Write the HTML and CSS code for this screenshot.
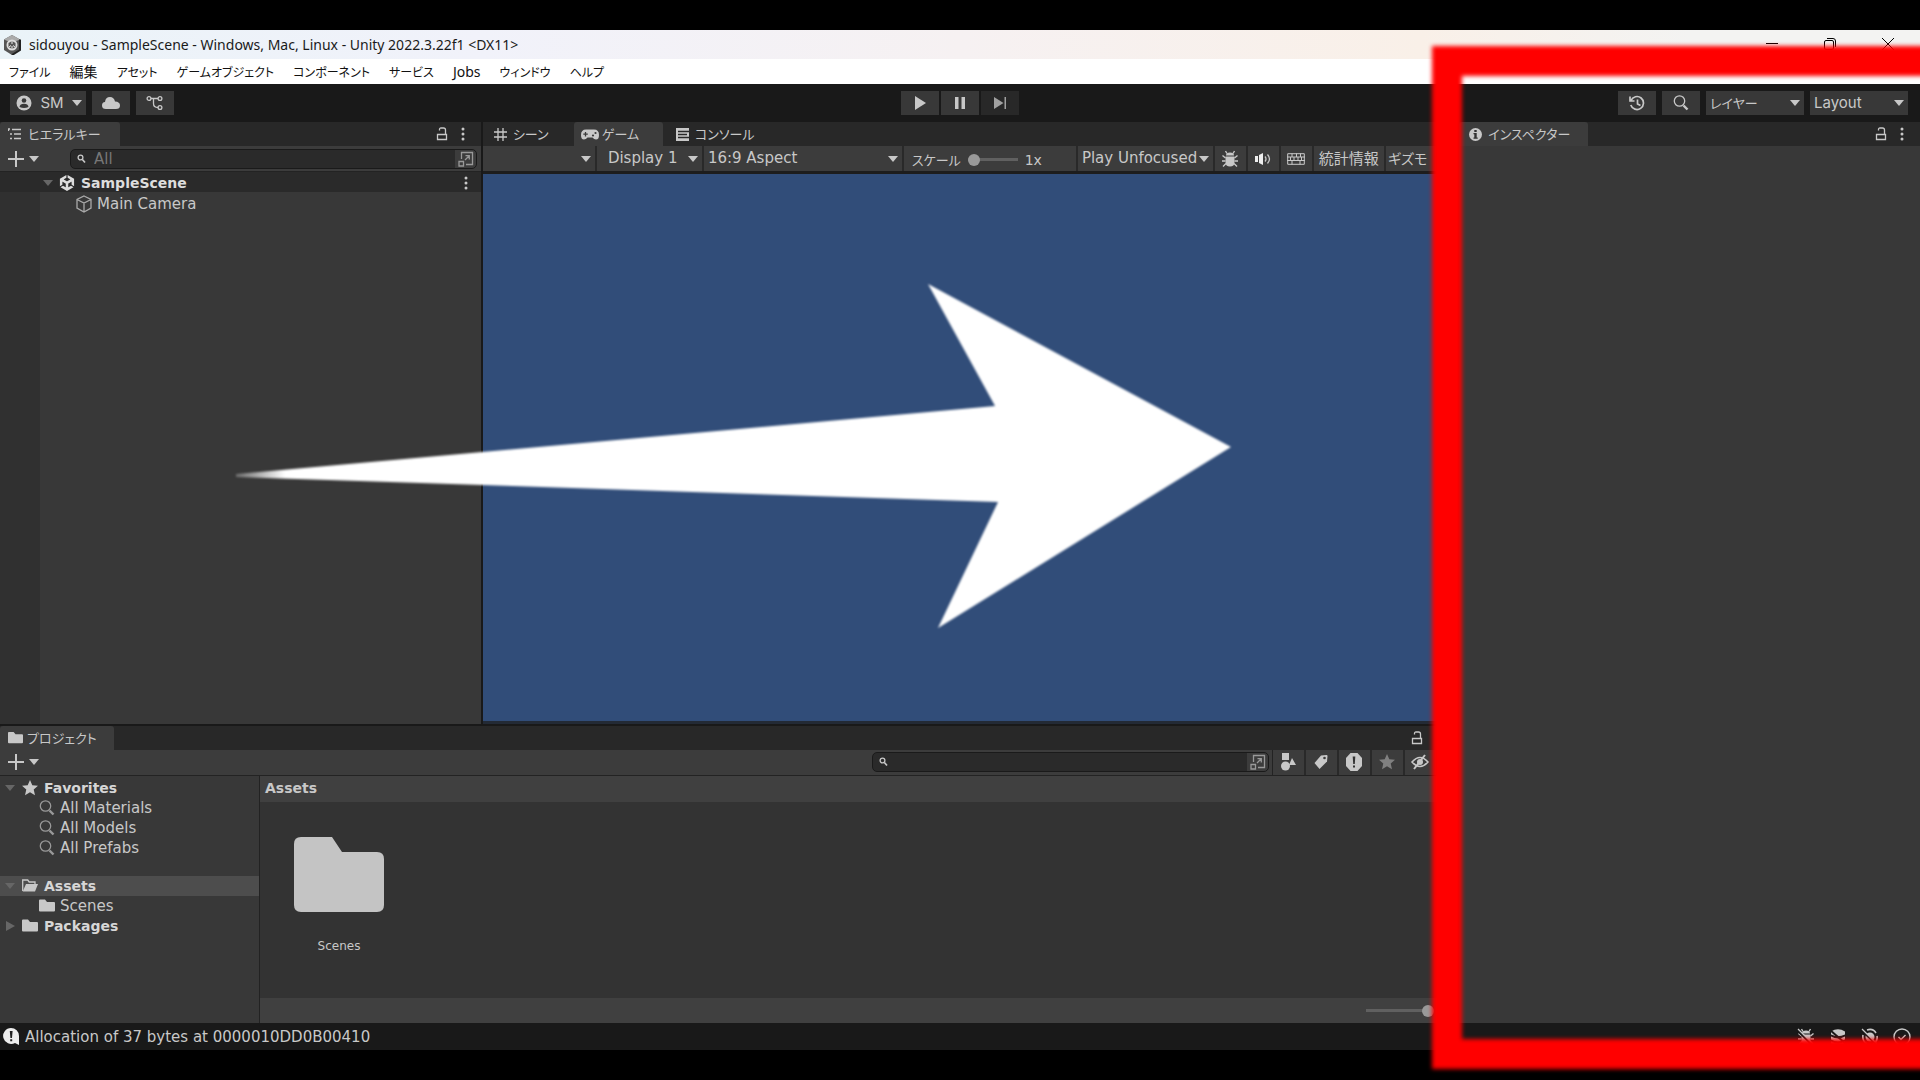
FILE: index.html
```html
<!DOCTYPE html>
<html lang="ja">
<head>
<meta charset="utf-8">
<meta name="viewport" content="width=device-width, initial-scale=1">
<title>sidouyou - SampleScene - Unity</title>
<link rel="stylesheet" href="styles.css">
</head>
<body>
<svg class="defs" width="0" height="0" aria-hidden="true">
  <symbol id="caret" viewBox="0 0 10 6"><path d="M0 0h10L5 6z"/></symbol>
  <symbol id="lock" viewBox="0 0 12 14"><path d="M1.5 7.500h9v5h-9zM3.500 3.500V2.500q0-1.500 1.500-1.500h2.500q2 0 2 2v4" fill="none" stroke="currentColor" stroke-width="1.3"/></symbol>
  <symbol id="dots" viewBox="0 0 4 14"><circle cx="2" cy="2" r="1.500"/><circle cx="2" cy="7" r="1.500"/><circle cx="2" cy="12" r="1.500"/></symbol>
  <symbol id="plus" viewBox="0 0 16 16"><path d="M7 0h2v7h7v2H9v7H7V9H0V7h7z"/></symbol>
  <symbol id="popout" viewBox="0 0 16 16"><path d="M3.500 8V1.500h11v12H8M1 10.500h4.500V15H1zM7 9l4-4M7.500 4.700h3.800v3.800" fill="none" stroke="currentColor" stroke-width="1.3"/></symbol>
  <symbol id="find" viewBox="0 0 10 10"><circle cx="3.500" cy="3.500" r="2.400" fill="none" stroke="currentColor" stroke-width="1.3"/><path d="M5.400 5.400L8 8.500" stroke="currentColor" stroke-width="1.6"/></symbol>
  <symbol id="lens" viewBox="0 0 16 16"><circle cx="6.500" cy="6" r="5.200" fill="none" stroke="currentColor" stroke-width="1.3"/><path d="M10.500 10.500L14.500 14.500" stroke="currentColor" stroke-width="2.400"/></symbol>
  <symbol id="folder" viewBox="0 0 16 13"><path d="M0 1.500Q0 .5 1 .5h5l2 2.500h7q1 0 1 1v7.500q0 1-1 1H1q-1 0-1-1z"/></symbol>
  <symbol id="star" viewBox="0 0 16 16"><path d="M8 0l2.300 5.300 5.700.5-4.300 3.800 1.300 5.600L8 12.300l-5 2.900 1.300-5.600L0 5.800l5.700-.5z"/></symbol>
  <symbol id="bug" viewBox="0 0 18 18"><path d="M5 5.500Q5 2.500 9 2.500t4 3zM4.500 6.500h9v6q0 4-4.500 4t-4.500-4z"/><path d="M6 3.500L4.500 1M12 3.500L13.500 1M4.500 8L1.500 5.500M13.500 8l3-2.500M4.500 11H1M13.500 11H17M5 13.500L2 16.500M13 13.500l3 3" fill="none" stroke="currentColor" stroke-width="1.4"/></symbol>
</svg>

<div class="window">
  <header class="titlebar">
    <svg class="app-icon" viewBox="0 0 18 20"><path d="M9 0l8 4.500v10.500L9 20l-8-5V4.500z" fill="#555"/><path d="M9 0l8 4.500L9 8 1 4.500z" fill="#aaa"/><circle cx="9" cy="10" r="5.500" fill="#ddd"/><path d="M9 6l3.500 2v4L9 14l-3.500-2V8z" fill="#555"/><path d="M9 6v3M9 14v-3M6 12l2-1.500M12 12l-2-1.500" stroke="#eee"/><path d="M17 4.500v10.500L9 20" fill="none" stroke="#222" stroke-width="2"/></svg>
    <span class="title-text">sidouyou - SampleScene - Windows, Mac, Linux - Unity 2022.3.22f1 &lt;DX11&gt;</span>
    <div class="window-buttons">
      <button aria-label="最小化"><svg width="12" height="12" viewBox="0 0 12 12"><path d="M0 5.500h12" stroke="#000"/></svg></button>
      <button aria-label="元に戻す"><svg width="12" height="12" viewBox="0 0 12 12"><rect x=".5" y="2.500" width="9" height="9" rx="1.500" fill="none" stroke="#000"/><path d="M3 .5h6q2.500 0 2.500 2.500v6" fill="none" stroke="#000"/></svg></button>
      <button aria-label="閉じる"><svg width="12" height="12" viewBox="0 0 12 12"><path d="M0 0l12 12M12 0L0 12" stroke="#000"/></svg></button>
    </div>
  </header>

  <nav class="menubar">
    <a href="#">ファイル</a><a class="wide" href="#">編集</a><a href="#">アセット</a><a href="#">ゲームオブジェクト</a><a href="#">コンポーネント</a><a href="#">サービス</a><a class="wide" href="#">Jobs</a><a href="#">ウィンドウ</a><a href="#">ヘルプ</a>
  </nav>

  <div class="main-toolbar">
    <div class="tool-group">
      <button class="tool account"><svg width="16" height="16" viewBox="0 0 16 16"><circle cx="8" cy="8" r="7.500"/><circle cx="8" cy="5.500" r="2.300" fill="#383838"/><path d="M3.500 12Q4 8.800 8 8.800t4.500 3.200Q8 14 3.500 12z" fill="#383838"/></svg><span>SM</span><svg class="caret"><use href="#caret"/></svg></button>
      <button class="tool" aria-label="クラウド"><svg width="18" height="14" viewBox="0 0 18 14"><path d="M4 13Q0 13 0 9.500T3 6Q3.500 1 8 1q4 0 5 4.500 5 .3 5 4Q18 13 14 13z"/></svg></button>
      <button class="tool" aria-label="バージョン管理"><svg width="18" height="16" viewBox="0 0 18 16" fill="none" stroke="currentColor" stroke-width="1.3"><circle cx="3" cy="3.500" r="1.900"/><circle cx="14" cy="3.500" r="1.900"/><circle cx="14" cy="12.500" r="1.900"/><path d="M5 3.500h7M7.500 3.500v5q0 4 4.500 4"/></svg></button>
    </div>
    <div class="tool-group play-group">
      <button class="tool" aria-label="再生"><svg width="12" height="14" viewBox="0 0 12 14"><path d="M1 0l11 7-11 7z"/></svg></button>
      <button class="tool" aria-label="一時停止"><svg width="12" height="12" viewBox="0 0 12 12"><path d="M1 0h3.500v12H1zM7.500 0H11v12H7.500z"/></svg></button>
      <button class="tool dim" aria-label="ステップ"><svg width="13" height="12" viewBox="0 0 13 12"><path d="M0 0l9.500 6L0 12zM10.500 0H12v12h-1.500z"/></svg></button>
    </div>
    <div class="tool-group end">
      <button class="tool" aria-label="履歴"><svg width="16" height="16" viewBox="0 0 16 16" fill="none" stroke="currentColor" stroke-width="1.700"><path d="M2 5.500A6.500 6.500 0 1 1 1.800 10M1 1.500v4.500h4.500M8.500 4.500V9l3 1.500"/></svg></button>
      <button class="tool" aria-label="検索"><svg width="16" height="16"><use href="#lens"/></svg></button>
      <label class="drop tool-drop"><select class="jp" aria-label="レイヤー"><option>レイヤー</option></select><svg class="caret"><use href="#caret"/></svg></label>
      <label class="drop tool-drop"><select aria-label="Layout"><option>Layout</option></select><svg class="caret"><use href="#caret"/></svg></label>
    </div>
  </div>

  <main class="workspace">
    <div class="left-area">
      <div class="upper">
        <section class="panel hierarchy">
          <div class="tabs">
            <button class="tab active"><svg width="14" height="12" viewBox="0 0 14 12"><path d="M0 1h2M4 1.500h9M2 6h2M6 6h7M2 10.500h2M6 10.500h7M.5 1v2" stroke="currentColor" stroke-width="1.3"/></svg>ヒエラルキー</button>
            <div class="tab-tools"><svg class="lock"><use href="#lock"/></svg><svg class="dots"><use href="#dots"/></svg></div>
          </div>
          <div class="bar">
            <button class="add" aria-label="作成"><svg width="16" height="16"><use href="#plus"/></svg><svg class="caret"><use href="#caret"/></svg></button>
            <label class="search"><svg width="10" height="10"><use href="#find"/></svg><input type="text" placeholder="All" aria-label="ヒエラルキー検索"><svg class="popout"><use href="#popout"/></svg></label>
          </div>
          <div class="scene-row"><svg class="caret fold"><use href="#caret"/></svg><svg width="16" height="16" viewBox="0 0 24 24"><path d="m12.929 4.294 3.800 2.193c.137.077.142.290 0 .367l-4.515 2.608a.42.42 0 0 1-.425 0L7.274 6.854c-.139-.074-.142-.293 0-.367l3.797-2.193V0L1.376 5.598v11.195l3.718-2.146v-4.386c-.003-.156.181-.268.318-.184l4.515 2.608a.425.425 0 0 1 .214.368v5.213c.002.156-.182.268-.318.183l-3.800-2.193-3.718 2.146L12 24l9.695-5.598-3.717-2.145-3.800 2.193c-.134.082-.323-.025-.318-.184v-5.213c0-.157.087-.296.214-.368l4.515-2.607c.134-.082.323.022.318.183v4.386l3.717 2.146V5.598L12.929 0z"/></svg><b>SampleScene</b><svg class="dots"><use href="#dots"/></svg></div>
          <div class="scene-body">
            <div class="object-row"><svg width="16" height="18" viewBox="0 0 16 18" fill="none" stroke="#aaa" stroke-width="1.3"><path d="M8 1l7 3.500v8.500L8 17l-7-4V4.500zM1 4.500L8 8l7-3.500M8 8v9"/></svg><span>Main Camera</span></div>
          </div>
        </section>

        <section class="panel game">
          <div class="tabs">
            <button class="tab scene-tab"><svg width="13" height="13" viewBox="0 0 13 13"><path d="M4 0v13M9 0v13M0 4h13M0 9h13" stroke="currentColor" stroke-width="1.3"/></svg>シーン</button>
            <button class="tab active game-tab"><svg width="18" height="11" viewBox="0 0 18 11"><path d="M5 .5h8Q18 .5 18 6q0 4.500-3 4.500-2 0-3.500-2h-5q-1.500 2-3.500 2-3 0-3-4.500Q0 .5 5 .5z"/><path d="M4.500 3v4.500M2.300 5.200h4.500" stroke="#3c3c3c" stroke-width="1.3"/><circle cx="12" cy="6.500" r="1.100" fill="#3c3c3c"/><circle cx="14.500" cy="4" r="1.100" fill="#3c3c3c"/></svg>ゲーム</button>
            <button class="tab console-tab"><svg width="13" height="13" viewBox="0 0 13 13"><path d="M0 0h13v13H0z"/><path d="M2 3.500h11M2 6.500h9M2 9.500h11" stroke="#282828" stroke-width="1.3"/></svg>コンソール</button>
          </div>
          <div class="bar game-bar">
            <label class="drop cell c-view"><select aria-label="ビュー"><option></option></select><svg class="caret"><use href="#caret"/></svg></label>
            <label class="drop cell c-display"><select aria-label="ディスプレイ"><option>Display 1</option></select><svg class="caret"><use href="#caret"/></svg></label>
            <label class="drop cell c-aspect"><select aria-label="アスペクト"><option>16:9 Aspect</option></select><svg class="caret"><use href="#caret"/></svg></label>
            <label class="cell c-scale"><span class="jp">スケール</span><input type="range" min="0" max="10" value="0"><span class="value">1x</span></label>
            <label class="drop cell c-focus"><select aria-label="再生フォーカス"><option>Play Unfocused</option></select><svg class="caret"><use href="#caret"/></svg></label>
            <button class="cell c-icon" aria-label="デバッグ"><svg width="18" height="18"><use href="#bug"/></svg></button>
            <button class="cell c-icon" aria-label="音声"><svg width="18" height="14" viewBox="0 0 18 14"><path d="M1 4h3v6H1zM5 3l4-2v12L5 11z" fill="#eee"/><path d="M11 4.500q2 2.500 0 5M13.500 2.500q4 4.500 0 9" fill="none" stroke="currentColor" stroke-width="1.3"/></svg></button>
            <button class="cell c-icon" aria-label="ショートカット"><svg width="18" height="12" viewBox="0 0 18 12"><path d="M.7.7h16.600v10.600H.7zM0 4h18M0 7.500h18M5 .5V4M9.500.5V4M13.500.5V4M3.500 4v3.500M7 4v3.500M11 4v3.500M14.500 4v3.500M5 8v3.500M13 8v3.500" fill="none" stroke="currentColor"/></svg></button>
            <button class="cell c-stats">統計情報</button>
            <button class="cell c-gizmo">ギズモ</button>
          </div>
          <div class="viewport"></div>
        </section>
      </div>

      <section class="panel project">
        <div class="tabs">
          <button class="tab active"><svg width="15" height="13"><use href="#folder"/></svg>プロジェクト</button>
          <div class="tab-tools"><svg class="lock"><use href="#lock"/></svg></div>
        </div>
        <div class="bar">
          <button class="add" aria-label="作成"><svg width="16" height="16"><use href="#plus"/></svg><svg class="caret"><use href="#caret"/></svg></button>
          <label class="search"><svg width="10" height="10"><use href="#find"/></svg><input type="text" aria-label="プロジェクト検索"><svg class="popout"><use href="#popout"/></svg></label>
          <div class="filters">
            <button class="cell" aria-label="タイプで検索"><svg width="16" height="18" viewBox="0 0 16 18"><path d="M2 0h7v7H2zM12 5l4 7H9z"/><circle cx="5.500" cy="13" r="4.500"/></svg></button>
            <button class="cell" aria-label="ラベルで検索"><svg width="16" height="16" viewBox="0 0 16 16"><path d="M8 1.500l5.500-.5q1 0 1 1L14 7.500 6.500 15 1.500 9z"/><circle cx="11.500" cy="4" r="1.300" fill="#3c3c3c"/></svg></button>
            <button class="cell" aria-label="ログ"><svg width="18" height="18" viewBox="0 0 18 18"><path d="M5.500 0h7L17 5v8l-4.500 5h-7L1 13V5z"/><path d="M7.700 3.500h2.600L9.800 11H8.200zM8 12.500h2v2H8z" fill="#333"/></svg></button>
            <button class="cell faint" aria-label="お気に入り"><svg width="16" height="16"><use href="#star"/></svg></button>
            <button class="cell" aria-label="非表示"><svg width="18" height="16" viewBox="0 0 18 16"><path d="M1 8q8-9 16 0-8 9-16 0z" fill="none" stroke="currentColor" stroke-width="1.600"/><circle cx="9" cy="8" r="3"/><path d="M3 15L14 1" stroke="currentColor" stroke-width="2"/></svg></button>
          </div>
        </div>
        <div class="project-body">
          <div class="tree">
            <div class="row"><svg class="caret fold"><use href="#caret"/></svg><svg class="ico" height="16"><use href="#star"/></svg><b>Favorites</b></div>
            <div class="row child"><svg class="ico" height="16"><use href="#lens"/></svg><span>All Materials</span></div>
            <div class="row child"><svg class="ico" height="16"><use href="#lens"/></svg><span>All Models</span></div>
            <div class="row child"><svg class="ico" height="16"><use href="#lens"/></svg><span>All Prefabs</span></div>
            <div class="row selected"><svg class="caret fold"><use href="#caret"/></svg><svg class="ico" height="13" viewBox="0 0 16 13"><path d="M.7 12V1h5l1.500 2H13v2" fill="none" stroke="currentColor" stroke-width="1.3"/><path d="M4 5h12l-3 7.500H.7z"/></svg><b>Assets</b></div>
            <div class="row child"><svg class="ico solid" height="13"><use href="#folder"/></svg><span>Scenes</span></div>
            <div class="row"><svg class="fold side" viewBox="0 0 10 10"><path d="M1 0l9 5-9 5z"/></svg><svg class="ico" height="13"><use href="#folder"/></svg><b>Packages</b></div>
          </div>
          <div class="browser">
            <h2>Assets</h2>
            <div class="files">
              <a class="file" href="#"><svg viewBox="0 0 90 75"><path d="M0 7q0-7 7-7h31l10 15h35q7 0 7 7v46q0 7-7 7H7q-7 0-7-7z"/></svg><span>Scenes</span></a>
            </div>
            <div class="size-bar"><input type="range" min="0" max="100" value="100" aria-label="アイコンサイズ"></div>
          </div>
        </div>
      </section>
    </div>

    <section class="panel inspector">
      <div class="tabs">
        <button class="tab active"><svg width="13" height="13" viewBox="0 0 13 13"><circle cx="6.500" cy="6.500" r="6.500"/><path d="M5.300 2h2.400v2H5.300zM4.500 5h3.200v4.500h1v1.200H4.500V9.500h.8V6.200h-.8z" fill="#333"/></svg>インスペクター</button>
        <div class="tab-tools"><svg class="lock"><use href="#lock"/></svg><svg class="dots"><use href="#dots"/></svg></div>
      </div>
    </section>
  </main>

  <footer class="status">
    <svg width="18" height="18" viewBox="0 0 18 18"><path d="M8 0a8 8 0 0 1 8 8v9l-4-2A8 8 0 1 1 8 0z" fill="#eee"/><path d="M6.800 3h2.800l-.6 7H7.400zM7.200 11.200h2v2h-2z" fill="#222"/></svg>
    <span>Allocation of 37 bytes at 0000010DD0B00410</span>
    <div class="status-icons">
      <svg width="18" height="18"><use href="#bug"/><path d="M0 2l16 16" stroke="#191919" stroke-width="2"/><path d="M1 1l16 16" stroke="currentColor" stroke-width="1.3"/></svg>
      <svg width="18" height="18" viewBox="0 0 18 18"><path d="M2 3.500Q9-1 16 3.500v3Q9 10 2 6.500zM2 8.500q7 4 14 0v3q-7 4-14 0zM2 13.500q7 4 14 0v2q-7 3-14 0z"/><path d="M1 2l16 14" stroke="#191919" stroke-width="2"/></svg>
      <svg width="18" height="18" viewBox="0 0 18 18"><circle cx="9" cy="9" r="4.500"/><path d="M6 2Q12 0 15 5M2 7q-1 6 4 9M16 8q1 5-4 8" fill="none" stroke="currentColor" stroke-width="1.6"/><path d="M0 2l16 15" stroke="#191919" stroke-width="2"/><path d="M1 1l15 15" stroke="currentColor" stroke-width="1.3"/></svg>
      <svg width="18" height="18" viewBox="0 0 18 18" fill="none" stroke="currentColor" stroke-width="1.4"><circle cx="9" cy="9" r="8"/><path d="M5.500 9l2.500 2.500L12.500 7"/></svg>
    </div>
  </footer>
</div>

<div class="annotations" aria-hidden="true">
  <svg class="arrow" viewBox="0 0 1920 1080" preserveAspectRatio="none">
    <defs><linearGradient id="tail" gradientUnits="userSpaceOnUse" x1="232" y1="0" x2="285" y2="0"><stop offset="0" stop-color="#fff" stop-opacity=".2"/><stop offset="1" stop-color="#fff"/></linearGradient></defs>
    <path d="M236 474L995 406 928 284 1231 447 938 628 998 502 236 477z" fill="url(#tail)"/>
  </svg>
  <div class="highlight"></div>
</div>
</body>
</html>
```
FILE: styles.css
```css
* { box-sizing: border-box; }

:root {
  --ui: "DejaVu Sans", "Noto Sans CJK JP", sans-serif;
  --jp: "Noto Sans CJK JP", sans-serif;
  --text: #c8c8c8;
  --panel: #383838;
  --bar: #3c3c3c;
  --strip: #282828;
  --line: #232323;
}

body {
  margin: 0;
  background: #000;
  color: var(--text);
  font: 15px/20px var(--ui);
}

button, select, input {
  margin: 0;
  padding: 0;
  border: 0;
  border-radius: 0;
  background: none;
  color: inherit;
  font: inherit;
}
a { color: inherit; text-decoration: none; }
b { font-size: 14px; }
svg { flex: none; }
svg:not([fill]) { fill: currentColor; }
.defs { position: absolute; }

.window {
  display: flex;
  flex-direction: column;
  min-height: 100vh;
  padding: 30px 0;
}

/* Title bar and menu */
.titlebar {
  display: flex;
  align-items: center;
  gap: 8px;
  height: 29px;
  padding-left: 3px;
  background: linear-gradient(90deg, #eaf3f8, #f1f2fa 25%, #f6f1f2 50%, #f9f0e8 74%, #f3f3f2 88%);
  color: #1a1a1a;
  font: 14px/20px "Noto Sans", sans-serif;
}
.app-icon { width: 18px; height: 20px; }
.window-buttons { display: flex; align-self: flex-start; margin-left: auto; padding-right: 3px; }
.window-buttons button { display: grid; place-items: center; width: 58px; height: 28px; }

.menubar {
  display: flex;
  align-items: center;
  gap: 19px;
  height: 25px;
  padding-left: 9px;
  background: #fff;
  color: #111;
  font: 12px/20px var(--jp);
  font-feature-settings: "palt";
}
.menubar .wide { font: 14px/20px "Noto Sans", var(--jp); }

/* Main toolbar */
.main-toolbar {
  display: grid;
  grid-template-columns: 1fr auto 1fr;
  height: 38px;
  padding: 7px 10px 0;
  background: #191919;
}
.tool-group { display: flex; align-items: flex-start; gap: 6px; }
.tool-group.end { justify-content: flex-end; padding-right: 2px; }
.play-group { gap: 2px; }
.tool {
  display: flex;
  align-items: center;
  justify-content: center;
  width: 38px;
  height: 24px;
  background: var(--panel);
}
.tool.dim { background: #282828; color: #a0a0a0; }
.tool.account { justify-content: space-between; width: 76px; padding: 0 4px 0 6px; font: 15px/20px Inter, sans-serif; }
.caret { width: 10px; height: 6px; }

.drop { position: relative; display: flex; align-items: center; }
.drop select { appearance: none; width: 100%; height: 100%; padding-left: 4px; }
.drop .caret { position: absolute; right: 4px; pointer-events: none; }
.tool-drop { width: 98px; height: 24px; background: var(--panel); font: 15px/20px Inter, sans-serif; }
.jp, .drop select.jp { font-family: var(--jp); font-size: 13px; font-feature-settings: "palt"; }

/* Workspace */
.workspace { display: flex; flex: 1; gap: 2px; background: #191919; }
.left-area { display: flex; flex: 1; flex-direction: column; min-width: 0; }
.upper { display: flex; flex: 601; gap: 2px; padding-bottom: 2px; }
.panel { display: flex; flex-direction: column; min-width: 0; background: var(--panel); }
.hierarchy { width: 33%; }
.game { flex: 1; overflow: hidden; }
.project { flex: 297; }
.inspector { width: 24%; }

.tabs { display: flex; height: 24px; background: var(--strip); }
.tab {
  display: flex;
  align-items: center;
  gap: 6px;
  padding: 0 0 0 8px;
  font: 13px/20px var(--jp);
  font-feature-settings: "palt";
  white-space: nowrap;
}
.tab.active { background: var(--bar); border-radius: 3px 3px 0 0; }
.hierarchy .tab { width: 120px; }
.project .tab { width: 114px; gap: 4px; }
.inspector .tab { width: 129px; padding-left: 10px; }
.scene-tab { width: 91px; padding-left: 11px; }
.game-tab { width: 89px; padding-left: 7px; gap: 3px; }
.console-tab { padding-left: 13px; }
.tab-tools { display: flex; align-items: center; gap: 13px; margin-left: auto; padding-right: 16px; }
.project .tab-tools { padding-right: 34px; }
.lock { width: 12px; height: 14px; }
.dots { width: 4px; height: 14px; }

.bar { display: flex; align-items: center; height: 26px; background: var(--bar); border-bottom: 1px solid var(--line); }
.add { display: flex; align-items: center; gap: 5px; padding-left: 8px; }
.search {
  display: flex;
  align-items: center;
  gap: 7px;
  height: 20px;
  padding: 0 2px 0 6px;
  border: 1px solid #1a1a1a;
  border-radius: 5px;
  background: linear-gradient(90deg, #2a2a2a calc(100% - 21px), #3c3c3c 0);
}
.search input { flex: 1; min-width: 0; outline: 0; }
.search input::placeholder { color: #777; opacity: 1; }
.popout { width: 16px; height: 16px; color: #999; }
.hierarchy .search { flex: 1; margin: 0 4px 0 31px; }

.scene-row { display: flex; align-items: center; gap: 6px; height: 20px; padding: 2px 13px 0 43px; background: #2a2a2a; color: #ddd; }
.scene-row .dots { margin-left: auto; color: var(--text); }
.scene-row .fold, .fold { color: #666; }
.scene-body { flex: 1; border-left: 40px solid #303030; }
.object-row { display: flex; align-items: center; gap: 5px; height: 22px; padding: 2px 0 0 36px; }

/* Game view */
.game-bar { height: 28px; border-bottom: 3px solid #1d1d1d; align-items: stretch; }
.cell { display: flex; align-items: center; justify-content: center; flex: none; border-right: 2px solid #292929; white-space: nowrap; }
.game-bar select { padding-bottom: 2px; }
.c-view { width: 114px; }
.c-display { width: 107px; }
.c-display select { padding-left: 11px; }
.c-aspect { width: 200px; }
.c-scale { width: 174px; justify-content: flex-start; gap: 7px; padding: 2px 0 0 8px; }
.c-scale .value { font-size: 14px; }
.c-focus { width: 137px; }
.c-icon { width: 33px; }
.c-stats { width: 72px; padding-bottom: 2px; font: 15px/20px var(--jp); }
.c-gizmo { flex: 1; justify-content: flex-start; padding: 0 0 2px 2px; font: 14px/20px var(--jp); font-feature-settings: "palt"; }
.viewport { flex: 1; background: #314d79; border-bottom: 3px solid #232a35; }

input[type="range"] { appearance: none; width: 50px; height: 12px; background: linear-gradient(#606060, #606060) center / 100% 3px no-repeat; }
input[type="range"]::-webkit-slider-thumb { appearance: none; width: 12px; height: 12px; border-radius: 50%; background: #999; }

/* Project */
.project .search { width: 397px; margin: 0 3px 0 auto; }
.filters { display: flex; align-self: stretch; width: 185px; border-left: 1px solid var(--line); }
.filters .cell { width: 33px; padding-right: 2px; }
.filters .faint { color: #808080; }
.project-body { display: flex; flex: 1; }
.tree { width: 260px; padding-top: 2px; border-right: 1px solid #222; }
.row { display: flex; align-items: center; height: 20px; padding-left: 5px; }
.row b { margin-left: 6px; color: #d6d6d6; }
.row .ico { width: 16px; margin-left: 7px; }
.row.child { padding-left: 32px; }
.row.child span { margin-left: 5px; }
.row.child .ico { color: #999; }
.row.child .solid { color: var(--text); }
.row.selected { margin-top: 18px; background: #4d4d4d; }
.row .side { width: 10px; height: 10px; }
.browser { display: flex; flex: 1; flex-direction: column; min-width: 0; background: #333; }
.browser h2 { margin: 0; height: 26px; padding: 2px 5px; background: #404040; font-size: 14px; line-height: 20px; }
.files { flex: 1; padding: 35px 34px; }
.file { display: flex; flex-direction: column; align-items: center; gap: 24px; width: 90px; font-size: 12px; }
.file svg { width: 90px; height: 75px; color: #c4c4c4; }
.size-bar { display: flex; align-items: center; justify-content: flex-end; height: 25px; padding-right: 23px; background: #404040; }
.size-bar input { width: 68px; }

/* Status bar */
.status { display: flex; align-items: center; gap: 4px; height: 27px; padding: 0 9px 0 3px; background: #191919; }
.status-icons { display: flex; gap: 14px; margin-left: auto; }

/* Marks drawn over the editor */
.annotations { position: absolute; inset: 0; overflow: hidden; pointer-events: none; }
.arrow { position: absolute; inset: 0; width: 100%; height: 100%; filter: blur(1px); }
.highlight { position: absolute; inset: 46px -40px 11px calc(76% - 27px); border: 30px solid #f00; filter: blur(2px); }
```
